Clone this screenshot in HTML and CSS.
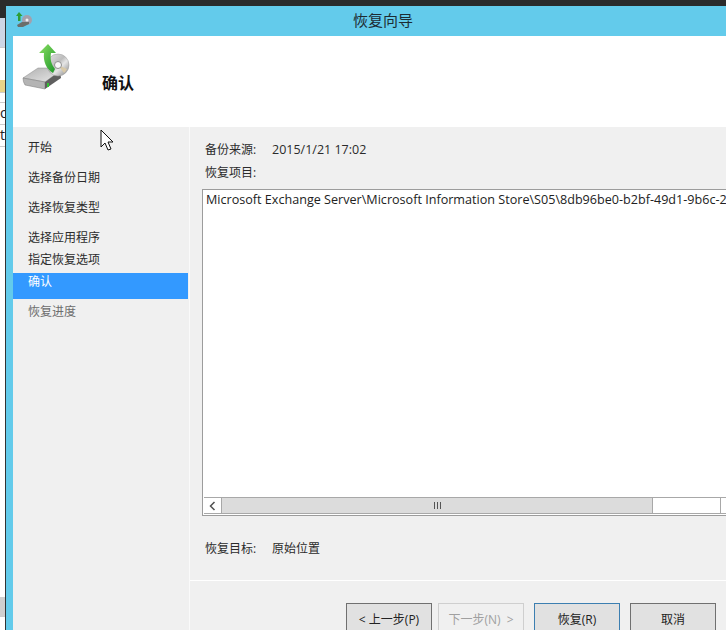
FILE: index.html
```html
<!DOCTYPE html>
<html lang="zh-CN">
<head>
  <meta charset="UTF-8" />
  <title>恢复向导</title>
  <link rel="stylesheet" href="styles.css">
</head>
<body>
  <div class="desktop">
    <div class="behind">
      <div class="behind-row head"></div>
      <div class="behind-row tall"></div>
      <div class="behind-row folder"></div>
      <div class="behind-row blank"></div>
      <div class="behind-row">or</div>
      <div class="behind-row">ti</div>
      <div class="behind-gap"></div>
      <div class="behind-row shade"></div>
    </div>

    <div class="window">
      <div class="titlebar">
        <svg class="title-icon" width="18" height="18" viewBox="0 0 18 18">
          <circle cx="12" cy="9" r="5" fill="#a3a0ad"/>
          <circle cx="12" cy="9" r="1.500" fill="#f0f0f0"/>
          <path d="M2 14l5-3h7v2l-6 3H3z" fill="#6a6e6a"/>
          <path d="M3 10V5H1l3-4 3.500 4H5.500v5z" fill="#2e9e35"/>
        </svg>
        <span class="title-text">恢复向导</span>
      </div>

      <div class="header">
        <svg class="header-icon" width="50" height="50" viewBox="0 0 50 50">
          <defs>
            <linearGradient id="disc" x1="0" y1="0" x2="1" y2="1">
              <stop offset="0" stop-color="#e4e4e4"/>
              <stop offset="0.45" stop-color="#bdbdbd"/>
              <stop offset="0.6" stop-color="#e6e6e6"/>
              <stop offset="1" stop-color="#7f7f7f"/>
            </linearGradient>
            <linearGradient id="top" x1="0" y1="0" x2="1" y2="1">
              <stop offset="0" stop-color="#b0b0b0"/>
              <stop offset="1" stop-color="#e8e8e8"/>
            </linearGradient>
            <linearGradient id="arrow" x1="0" y1="0" x2="1" y2="1">
              <stop offset="0" stop-color="#8be062"/>
              <stop offset="1" stop-color="#1d962a"/>
            </linearGradient>
          </defs>
          <path d="M3 36l15-10h22v3L25 40z" fill="url(#top)" stroke="#8a8a8a" stroke-width="0.500"/>
          <path d="M3 36l22 4v7L5 43q-2-3-2-7z" fill="#b4b4b4" stroke="#777" stroke-width="0.500"/>
          <path d="M25 40l15-11 1 7-16 11z" fill="#5f5f5f"/>
          <rect x="27" y="41" width="2" height="4" fill="#34c034"/>
          <circle cx="38" cy="23" r="11" fill="url(#disc)" stroke="#9a9a9a" stroke-width="0.500"/>
          <path d="M38 23l9 4a10 10 0 0 1-3 4z" fill="#d8c9a8"/>
          <circle cx="38" cy="23" r="3.500" fill="#fafafa" stroke="#8e8e8e"/>
          <path d="M33 31C26 27 23 19 24 11h-5L28 2l8 9h-5c-1 6 0 11 4 16z" fill="url(#arrow)"/>
        </svg>
        <h1 class="header-title">确认</h1>
      </div>

      <div class="main">
        <ul class="steps">
          <li>开始</li>
          <li class="spaced">选择备份日期</li>
          <li class="spaced">选择恢复类型</li>
          <li class="spaced">选择应用程序</li>
          <li>指定恢复选项</li>
          <li class="current">确认</li>
          <li class="pending">恢复进度</li>
        </ul>

        <div class="content">
          <div class="fields">
            <div class="field"><span class="label">备份来源:</span><span class="date">2015/1/21 17:02</span></div>
            <div class="field"><span class="label">恢复项目:</span></div>

            <div class="listbox">
              <div class="list-text">Microsoft Exchange Server\Microsoft Information Store\S05\8db96be0-b2bf-49d1-9b6c-2a7f3e10c5d4</div>
              <div class="scrollbar">
                <div class="scroll-btn">
                  <svg width="7" height="10" viewBox="0 0 7 10"><path d="M5.500 1L1.500 5l4 4" fill="none" stroke="#505050" stroke-width="1.500"/></svg>
                </div>
                <div class="scroll-thumb"><span class="grip"></span></div>
                <div class="scroll-rest"></div>
              </div>
            </div>

            <div class="field target"><span class="label">恢复目标:</span><span>原始位置</span></div>
          </div>

          <div class="buttons">
            <button class="btn back">&lt; 上一步(P)</button>
            <button class="btn disabled">下一步(N)&nbsp; &gt;</button>
            <button class="btn primary">恢复(R)</button>
            <button class="btn">取消</button>
          </div>
        </div>
      </div>
    </div>
  </div>

  <svg class="pointer" width="14" height="22" viewBox="0 0 14 22">
    <path d="M1 1v17l4-4 3 7 3-1-3-7h5z" fill="#fff" stroke="#111" stroke-width="1"/>
  </svg>
</body>
</html>
```

FILE: styles.css
```css
:root {
  --frame: #63cbeb;
  --panel: #f0f0f0;
  --text: #2b2b2b;
  --line: #9c9c9c;
}

* {
  margin: 0;
  padding: 0;
  box-sizing: border-box;
}

html, body {
  height: 100%;
  overflow: hidden;
}

body {
  background: #2b2b2b;
  color: var(--text);
  font-family: "Open Sans", "Noto Sans CJK SC", sans-serif;
  font-size: 12px;
}

.desktop {
  display: flex;
  width: 726px;
  height: 630px;
  padding-top: 6px;
  overflow: hidden;
}

.behind {
  flex: none;
  width: 6px;
  margin-top: 12px;
  background: #fff;
  border-right: 1px solid #333;
  overflow: hidden;
  font-size: 14px;
  line-height: 20px;
  color: #222;
}

.behind-row {
  height: 22px;
  border-bottom: 1px solid #ccc;
}

.behind-row.head {
  height: 30px;
  background: #cdd6e5;
}

.behind-row.tall {
  height: 32px;
  border-bottom: 0;
}

.behind-row.folder {
  height: 13px;
  background: #e8d488;
}

.behind-row.blank {
  height: 10px;
}

.behind-gap {
  height: 450px;
}

.behind-row.shade {
  height: 20px;
  background: #cfcfcf;
}

.window {
  flex: none;
  width: 754px;
  height: 640px;
  background: var(--frame);
  padding-left: 7px;
}

.titlebar {
  display: flex;
  align-items: center;
  justify-content: center;
  position: relative;
  height: 30px;
  margin-left: -7px;
  padding-bottom: 4px;
  font-size: 15px;
  font-family: "Noto Sans CJK SC", sans-serif;
  color: #1d2b33;
}

.title-icon {
  position: absolute;
  left: 9px;
  top: 5px;
}

.header {
  display: flex;
  align-items: center;
  height: 91px;
  background: #fff;
}

.header-icon {
  flex: none;
  align-self: flex-start;
  margin: 6px 0 0 7px;
}

.header-title {
  margin-left: 32px;
  font-family: "Noto Sans CJK SC", sans-serif;
  font-size: 16px;
  font-weight: 700;
  color: #111;
}

.main {
  display: flex;
  height: 520px;
  background: var(--panel);
}

.steps {
  flex: none;
  width: 175px;
  padding-top: 9px;
  list-style: none;
}

.steps li {
  height: 22px;
  padding-left: 15px;
  line-height: 24px;
}

.steps li.spaced {
  margin-top: 8px;
}

.steps li.current {
  height: 26px;
  margin-top: 3px;
  line-height: 18px;
  background: #3399ff;
  color: #fff;
}

.steps li.pending {
  margin-top: 1px;
  color: #6d6d6d;
}

.content {
  flex: 1;
  margin-left: 1px;
  border-left: 1px solid #fafafa;
}

.fields {
  height: 454px;
  padding: 10px 0 0 15px;
  border-bottom: 1px solid #fff;
}

.field {
  display: flex;
  height: 23px;
  line-height: 25px;
}

.field.target {
  line-height: 23px;
}

.label {
  width: 67px;
}

.date {
  font-size: 12.500px;
}

.listbox {
  display: flex;
  flex-direction: column;
  width: 545px;
  height: 327px;
  margin: 6px 0 21px -3px;
  background: #fff;
  border: 1px solid var(--line);
}

.list-text {
  flex: 1;
  padding: 1px 0 0 3px;
  font-size: 12.600px;
  line-height: 18px;
  white-space: nowrap;
  overflow: hidden;
  color: #222;
}

.scrollbar {
  display: flex;
  height: 17px;
  margin-left: 1px;
  margin-bottom: 1px;
  background: #fff;
  border-top: 1px solid #a8a8a8;
  border-bottom: 1px solid #a8a8a8;
}

.scroll-btn {
  display: flex;
  align-items: center;
  justify-content: center;
  width: 17px;
}

.scroll-thumb {
  display: flex;
  align-items: center;
  justify-content: center;
  width: 432px;
  background: #dcdcdc;
  border-left: 1px solid #a8a8a8;
  border-right: 1px solid #a8a8a8;
}

.grip {
  width: 7px;
  height: 7px;
  background: repeating-linear-gradient(90deg, #555 0, #555 1px, transparent 1px, transparent 3px);
}

.scroll-rest {
  width: 68px;
  border-right: 1px solid #a8a8a8;
}

.buttons {
  display: flex;
  gap: 10px;
  padding: 22px 0 0 156px;
}

.btn {
  width: 86px;
  height: 32px;
  background: #e1e1e1;
  border: 1px solid #707070;
  font: inherit;
  color: #222;
}

.btn.back {
  margin-right: -4px;
}

.btn.disabled {
  background: #f0f0f0;
  border-color: #cfcfcf;
  color: #a0a0a0;
}

.btn.primary {
  border-color: #3c7fb1;
}

.pointer {
  position: absolute;
  left: 100px;
  top: 129px;
}
```
